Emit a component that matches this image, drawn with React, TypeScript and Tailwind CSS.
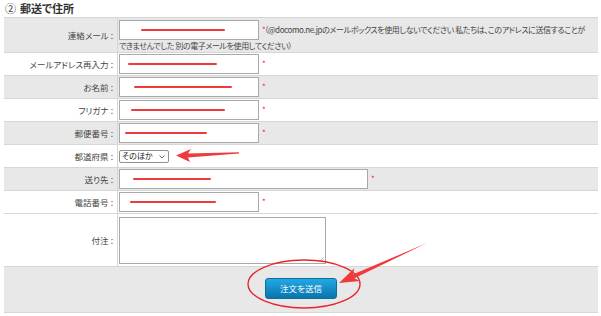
import type { ReactNode } from "react";

const font = "[font-family:'Noto_Sans_CJK_JP',sans-serif] [font-feature-settings:'palt']";

interface Row {
  label: string;
  height: string;
  tone: "grey" | "white";
  content: ReactNode;
}

function Req() {
  return <span className="ml-[3px] text-[8px] leading-none text-[#e8262a]">*</span>;
}

function Field({ width, mark }: { width: string; mark: [number, number] }) {
  // mark = [left offset, length] of the red redaction line
  return (
    <span className={`relative inline-block h-[20px] border border-[#a9a9a9] bg-white align-middle ${width}`}>
      <span
        className="absolute top-[8px] h-[2px] rounded-full bg-[#ef3b3b]"
        style={{ left: mark[0], width: mark[1] }}
      />
    </span>
  );
}

const rows: Row[] = [
  {
    label: "連絡メール",
    height: "h-[35px]",
    tone: "grey",
    content: (
      <div className="pt-[2px] text-[8px] leading-[14px] tracking-[-0.4px] text-[#444] whitespace-nowrap">
        <div className="flex items-center">
          <Field width="w-[140px]" mark={[21, 84]} />
          <Req />
          <span className="-ml-[1px]">（@docomo.ne.jpのメールボックスを使用しないでください 私たちは、このアドレスに送信することが</span>
        </div>
        <div className="-mt-[1px]">できませんでした 別の電子メールを使用してください）</div>
      </div>
    ),
  },
  { label: "メールアドレス再入力", height: "h-[23px]", tone: "white", content: <><Field width="w-[140px]" mark={[8, 89]} /><Req /></> },
  { label: "お名前", height: "h-[23px]", tone: "grey", content: <><Field width="w-[140px]" mark={[14, 98]} /><Req /></> },
  { label: "フリガナ", height: "h-[23px]", tone: "white", content: <><Field width="w-[140px]" mark={[11, 94]} /><Req /></> },
  { label: "郵便番号", height: "h-[23px]", tone: "grey", content: <><Field width="w-[140px]" mark={[5, 82]} /><Req /></> },
  {
    label: "都道府県",
    height: "h-[23px]",
    tone: "white",
    content: (
      <span className="relative inline-flex h-[13px] w-[50px] items-center rounded-[2px] border border-[#8f8f8f] bg-white pl-[2px] text-[8px] leading-none text-[#222]">
        そのほか
        <svg className="absolute right-[3px] top-[4px]" width="6" height="4" viewBox="0 0 6 4" fill="none">
          <path d="M0.5 0.5 L3 3 L5.5 0.5" stroke="#555" strokeWidth="0.9" />
        </svg>
      </span>
    ),
  },
  { label: "送り先", height: "h-[23px]", tone: "grey", content: <><Field width="w-[249px]" mark={[13, 78]} /><Req /></> },
  { label: "電話番号", height: "h-[23px]", tone: "white", content: <><Field width="w-[140px]" mark={[10, 86]} /><Req /></> },
  {
    label: "付注",
    height: "h-[53px]",
    tone: "white",
    content: (
      <span className="relative block h-[47px] w-[207px] border border-[#a9a9a9] bg-white">
        <svg className="absolute bottom-[1px] right-[1px]" width="5" height="5" viewBox="0 0 5 5">
          <path d="M4.5 0.5 L0.5 4.5 M4.5 2.5 L2.5 4.5" stroke="#999" strokeWidth="0.7" />
        </svg>
      </span>
    ),
  },
];

export default function App() {
  return (
    <div className={`relative h-[316px] w-[601px] overflow-hidden bg-white ${font}`}>
      <div className="flex h-[17px] items-center gap-[4px] pl-[5px] text-[11px] font-bold leading-none text-[#333]">
        <span className="text-[11px] font-normal">②</span>
        <span>郵送で住所</span>
      </div>

      <div className="mx-[4px] w-[594px] border-t border-[#d6d6d6]">
        {rows.map((row) => (
          <div
            key={row.label}
            className={`flex border-b border-[#d6d6d6] ${row.height} ${row.tone === "grey" ? "bg-[#e8e8e8]" : "bg-white"}`}
          >
            <div className="flex w-[114px] shrink-0 items-center justify-end border-r border-[#d6d6d6] pr-[4px] text-[8.5px] leading-none text-[#444] whitespace-nowrap">
              {row.label}
              <span className="ml-[2px]">:</span>
            </div>
            <div className="flex min-w-0 flex-1 items-center pl-[1px]">{row.content}</div>
          </div>
        ))}
        <div className="flex h-[46px] items-center justify-center border-b border-[#d6d6d6] bg-[#e8e8e8] pb-[2px]">
          <button className="h-[21px] w-[72px] rounded-[3px] border border-[#0b6c9e] bg-gradient-to-b from-[#22a9e4] to-[#0a74ad] text-[8.5px] text-white">
            注文を送信
          </button>
        </div>
      </div>

      {/* annotation overlay */}
      <svg className="pointer-events-none absolute left-0 top-0" width="601" height="316" viewBox="0 0 601 316">
        <ellipse cx="304" cy="284" rx="56" ry="24" fill="none" stroke="#e8262a" strokeWidth="1.4" />
        <polygon points="176,155.5 191,149 188,153.5 239,152.3 239,153.5 188,157.5 190,162" fill="#ef3b3b" />
        <polygon points="339,283 354.3,268.3 352.8,274.6 427,243 354.4,278.2 360.1,281.1" fill="#ef3b3b" />
      </svg>
    </div>
  );
}
